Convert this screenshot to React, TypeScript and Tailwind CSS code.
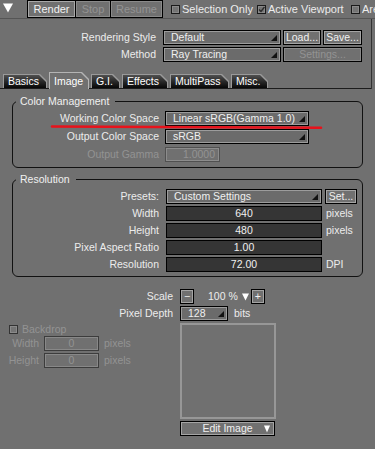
import React from 'react';

const clip = '[clip-path:polygon(0_0,calc(100%_-_7px)_0,100%_7px,100%_100%,0_100%)]';

function Corner() {
  return (
    <svg className="absolute right-[3px] bottom-[3px]" width="6" height="6" viewBox="0 0 6 6">
      <polygon points="6,0 6,6 0,6" fill="#111" />
    </svg>
  );
}

function Select({ value, w }: { value: string; w: string }) {
  return (
    <div className={`relative h-[15px] ${w} shrink-0 border border-black bg-[#6b6b6b] shadow-[inset_0_0_0_1px_#9c9c9c] pl-[7px] flex items-center text-[#f0f0f0] leading-none`}>
      {value}
      <Corner />
    </div>
  );
}

function Btn({ label, w, disabled }: { label: string; w: string; disabled?: boolean }) {
  return (
    <div
      className={`h-[15px] ${w} shrink-0 border border-black flex items-center justify-center leading-none ${
        disabled ? 'shadow-[inset_0_0_0_1px_#888888] text-[#939393]' : 'shadow-[inset_0_0_0_1px_#a4a4a4] text-[#f0f0f0]'
      }`}
    >
      {label}
    </div>
  );
}

function Field({ value }: { value: string }) {
  return (
    <div className="h-[15px] w-[156px] shrink-0 border border-black bg-[#353535] flex items-center justify-center text-[#f0f0f0] leading-none">
      {value}
    </div>
  );
}

function Box({ checked, dim }: { checked?: boolean; dim?: boolean }) {
  return (
    <div className={`w-[9px] h-[9px] shrink-0 border ${dim ? 'border-[#333]' : 'border-[#1a1a1a]'} bg-[#747474] shadow-[inset_0_0_0_1px_#8a8a8a] flex items-center justify-center`}>
      {checked && (
        <svg width="7" height="7" viewBox="0 0 7 7">
          <polyline points="1,3.5 3,5.5 6.5,1" fill="none" stroke="#2a2a2a" strokeWidth="1.4" />
        </svg>
      )}
    </div>
  );
}

function Tab({ label, w, active }: { label: string; w: string; active?: boolean }) {
  if (active) {
    return (
      <div className={`relative z-10 h-[17px] mb-[-1px] ${w} bg-[#b4b4b4] pt-px px-px ${clip}`}>
        <div className={`h-full bg-[#707070] ${clip} pl-[4px] pt-[3px] text-white leading-none`}>{label}</div>
      </div>
    );
  }
  return (
    <div className={`h-[14px] ${w} bg-[#9a9a9a] pt-px px-px ${clip}`}>
      <div className={`h-full bg-linear-to-b from-[#505050] to-[#080808] ${clip} pl-[4px] flex items-center text-white leading-none`}>
        {label}
      </div>
    </div>
  );
}

function Row({ label, children, dim }: { label: string; children: React.ReactNode; dim?: boolean }) {
  return (
    <div className="flex items-center h-[15px]">
      <div className={`w-[146px] text-right leading-none ${dim ? 'text-[#939393]' : 'text-[#ececec]'}`}>{label}</div>
      {children}
    </div>
  );
}

export default function App() {
  return (
    <div className="relative w-[375px] h-[449px] overflow-hidden bg-[#707070] font-['Liberation_Sans',Arial,sans-serif] text-[10.5px] text-[#ececec]">
      {/* toolbar */}
      <div className="h-[19px] border-b border-[#555] flex items-start whitespace-nowrap text-[11px]">
        <div className="w-[27px] shrink-0 h-[18px] pl-[3px] pt-[3px]">
          <svg width="10" height="10" viewBox="0 0 10 10">
            <polygon points="0,0.5 10,0.5 5,9.5" fill="#fff" />
          </svg>
        </div>
        <div className="h-[18px] shrink-0 flex gap-px bg-black p-px">
          <div className="h-[16px] w-[47px] bg-[#707070] border border-[#a8a8a8] flex items-center justify-center text-[#f2f2f2] leading-none">Render</div>
          <div className="h-[16px] w-[34px] bg-[#707070] border border-[#8a8a8a] flex items-center justify-center text-[#939393] leading-none">Stop</div>
          <div className="h-[16px] w-[51px] bg-[#707070] border border-[#8a8a8a] flex items-center justify-center text-[#939393] leading-none">Resume</div>
        </div>
        <div className="h-[18px] shrink-0 flex items-center ml-[8px]">
          <Box />
          <span className="ml-[2px] w-[75px] shrink-0 leading-none">Selection Only</span>
          <Box checked />
          <span className="ml-[2px] w-[83px] shrink-0 leading-none">Active Viewport</span>
          <Box />
          <span className="ml-[2px] leading-none">Area</span>
        </div>
      </div>

      {/* rendering style + tabs */}
      <div className="w-[372px] border-r border-[#333] pt-[11px]">
        <div className="flex items-center h-[15px]">
          <div className="w-[156px] text-right leading-none">Rendering Style</div>
          <div className="ml-[7px] flex gap-[2px]">
            <Select value="Default" w="w-[118px]" />
            <Btn label="Load..." w="w-[38px]" />
            <Btn label="Save..." w="w-[39px]" />
          </div>
        </div>
        <div className="mt-[2px] flex items-center h-[15px]">
          <div className="w-[156px] text-right leading-none">Method</div>
          <div className="ml-[7px] flex gap-[2px]">
            <Select value="Ray Tracing" w="w-[118px]" />
            <Btn label="Settings..." w="w-[79px]" disabled />
          </div>
        </div>
        <div className="mt-[10px] h-[17px] border-b border-[#1c1c1c] flex items-end pl-[3px] gap-[2px]">
          <Tab label="Basics" w="w-[44px]" />
          <Tab label="Image" w="w-[40px]" active />
          <Tab label="G.I." w="w-[29px]" />
          <Tab label="Effects" w="w-[46px]" />
          <Tab label="MultiPass" w="w-[59px]" />
          <Tab label="Misc." w="w-[37px]" />
        </div>
      </div>

      {/* color management */}
      <fieldset className="mt-[6px] ml-[12px] w-[351px] border border-[#111] rounded-[6px] pb-[5px]">
        <legend className="ml-[3px] px-[4px] pr-[6px] leading-[12px] text-[#f0f0f0]">Color Management</legend>
        <div className="pt-[4px] flex flex-col gap-[3px]">
          <Row label="Working Color Space">
            <div className="ml-[6px]">
              <Select value="Linear sRGB(Gamma 1.0)" w="w-[144px]" />
            </div>
          </Row>
          <Row label="Output Color Space">
            <div className="ml-[6px]">
              <Select value="sRGB" w="w-[144px]" />
            </div>
          </Row>
          <Row label="Output Gamma" dim>
            <div className="ml-[6px] h-[15px] w-[55px] border border-[#505050] shadow-[inset_0_0_0_1px_#8c8c8c] flex items-center justify-end pr-[4px] text-[#939393] leading-none">
              1.0000
            </div>
          </Row>
        </div>
      </fieldset>

      {/* resolution */}
      <fieldset className="mt-[5px] ml-[12px] w-[351px] border border-[#111] rounded-[6px] pb-[4px]">
        <legend className="ml-[3px] px-[4px] pr-[6px] leading-[12px] text-[#f0f0f0]">Resolution</legend>
        <div className="pt-[4px] flex flex-col gap-[2px]">
          <Row label="Presets:">
            <div className="ml-[7px] flex gap-[3px]">
              <Select value="Custom Settings" w="w-[156px]" />
              <Btn label="Set..." w="w-[32px]" />
            </div>
          </Row>
          <Row label="Width">
            <div className="ml-[7px] flex items-center">
              <Field value="640" />
              <span className="ml-[4px] leading-none">pixels</span>
            </div>
          </Row>
          <Row label="Height">
            <div className="ml-[7px] flex items-center">
              <Field value="480" />
              <span className="ml-[4px] leading-none">pixels</span>
            </div>
          </Row>
          <Row label="Pixel Aspect Ratio">
            <div className="ml-[7px] flex items-center">
              <Field value="1.00" />
            </div>
          </Row>
          <Row label="Resolution">
            <div className="ml-[7px] flex items-center">
              <Field value="72.00" />
              <span className="ml-[4px] leading-none">DPI</span>
            </div>
          </Row>
        </div>
      </fieldset>

      {/* scale / depth / backdrop */}
      <div className="mt-[12px] grid grid-cols-[173px_auto] gap-x-[7px] gap-y-[2px]">
        <div className="h-[15px] flex items-center justify-end leading-none">Scale</div>
        <div className="h-[15px] flex items-center">
          <Btn label="−" w="w-[14px]" />
          <span className="ml-[14px] leading-none">100 %</span>
          <svg className="ml-[4px]" width="7" height="8" viewBox="0 0 7 8">
            <polygon points="0,0.5 7,0.5 3.5,7.5" fill="#fff" />
          </svg>
          <div className="ml-[2px]">
            <Btn label="+" w="w-[14px]" />
          </div>
        </div>

        <div className="h-[15px] flex items-center justify-end leading-none">Pixel Depth</div>
        <div className="h-[15px] flex items-center">
          <Select value="128" w="w-[48px]" />
          <span className="ml-[6px] leading-none">bits</span>
        </div>

        <div className="flex flex-col text-[#939393]">
          <div className="mt-px h-[10px] pl-[9px] flex items-center">
            <Box dim />
            <span className="ml-[4px] leading-none">Backdrop</span>
          </div>
          <div className="mt-[2px] h-[15px] flex items-center">
            <div className="w-[39px] text-right leading-none">Width</div>
            <div className="ml-[5px] h-[15px] w-[55px] border border-[#3c3c3c] shadow-[inset_0_0_0_1px_#888] flex items-center justify-center leading-none">0</div>
            <span className="ml-[5px] leading-none">pixels</span>
          </div>
          <div className="mt-[2px] h-[15px] flex items-center">
            <div className="w-[39px] text-right leading-none">Height</div>
            <div className="ml-[5px] h-[15px] w-[55px] border border-[#3c3c3c] shadow-[inset_0_0_0_1px_#888] flex items-center justify-center leading-none">0</div>
            <span className="ml-[5px] leading-none">pixels</span>
          </div>
        </div>
        <div className="flex flex-col">
          <div className="w-[96px] h-[96px] border-2 border-[#979797]" />
          <div className="mt-[2px] relative h-[15px] w-[95px] border border-black shadow-[inset_0_0_0_1px_#a4a4a4] flex items-center justify-center text-[#f0f0f0] leading-none">
            Edit Image
            <svg className="absolute right-[4px] top-[3px]" width="6" height="8" viewBox="0 0 6 8">
              <polygon points="0,0.5 6,0.5 3,7.5" fill="#fff" />
            </svg>
          </div>
        </div>
      </div>

      {/* red annotation */}
      <svg className="absolute left-0 top-0 pointer-events-none" width="375" height="449">
        <line x1="52" y1="126.5" x2="321" y2="127.8" stroke="#e8121b" strokeWidth="2.6" strokeLinecap="round" />
      </svg>
    </div>
  );
}
